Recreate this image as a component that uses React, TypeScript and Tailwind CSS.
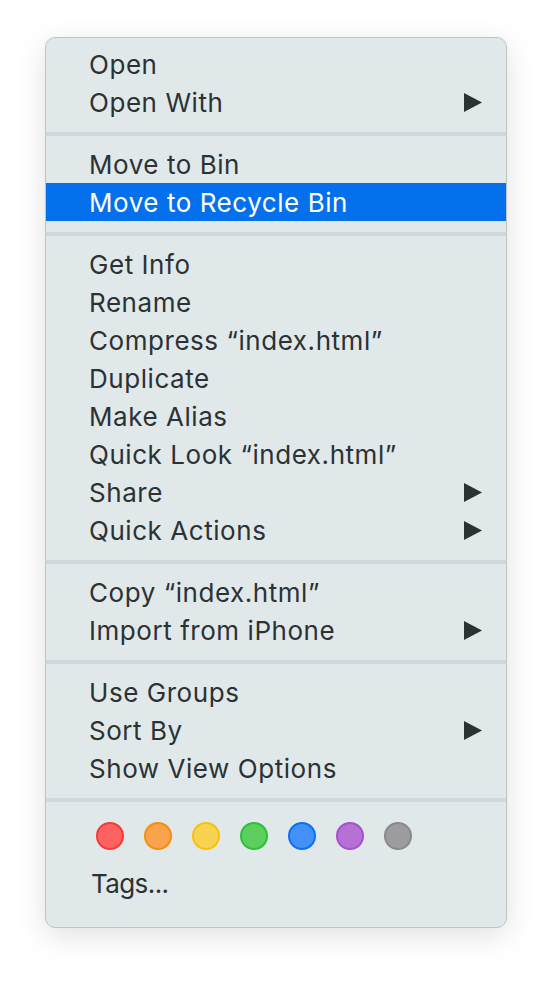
import React from "react";

type Item = { label: string; arrow?: boolean; active?: boolean };

const groups: Item[][] = [
  [{ label: "Open" }, { label: "Open With", arrow: true }],
  [{ label: "Move to Bin" }, { label: "Move to Recycle Bin", active: true }],
  [
    { label: "Get Info" },
    { label: "Rename" },
    { label: "Compress \u201cindex.html\u201d" },
    { label: "Duplicate" },
    { label: "Make Alias" },
    { label: "Quick Look \u201cindex.html\u201d" },
    { label: "Share", arrow: true },
    { label: "Quick Actions", arrow: true },
  ],
  [{ label: "Copy \u201cindex.html\u201d" }, { label: "Import from iPhone", arrow: true }],
  [{ label: "Use Groups" }, { label: "Sort By", arrow: true }, { label: "Show View Options" }],
];

const dots = [
  "bg-[#ff6160] border-[#f53b34]",
  "bg-[#f9a34c] border-[#f58f0b]",
  "bg-[#f8d251] border-[#f7c20c]",
  "bg-[#5ccf5f] border-[#29c23a]",
  "bg-[#4390fa] border-[#0a72f0]",
  "bg-[#b771d5] border-[#a650cc]",
  "bg-[#9c9b9f] border-[#8a898d]",
];

function Arrow({ active }: { active?: boolean }) {
  return (
    <svg width="18" height="19" viewBox="0 0 18 19" className="mr-[24px]">
      <polygon points="0,0 18,9.5 0,19" fill={active ? "#ffffff" : "#2b3234"} />
    </svg>
  );
}

function Row({ item }: { item: Item }) {
  return (
    <div
      className={`flex h-[38px] items-center justify-between pl-[43px] ${
        item.active ? "bg-[#0470ec] text-white" : "text-[#2b3234]"
      }`}
    >
      <span className="pt-[1px]">{item.label}</span>
      {item.arrow && <Arrow active={item.active} />}
    </div>
  );
}

function Sep() {
  return (
    <div className="flex h-[24px] flex-col pt-[11px]">
      <div className="h-[4px] bg-[#cdd9da]" />
    </div>
  );
}

export default function App() {
  return (
    <div className="min-h-[988px] w-[552px] bg-white pt-[37px] pl-[45px]">
      <div
        className="flex w-[462px] flex-col overflow-hidden rounded-[10px] border border-[#bfc3c4] bg-[#e1e8ea] pt-[7px] pb-0 text-[26px] leading-none tracking-[0.55px] shadow-[0_8px_30px_rgba(0,0,0,0.12)]"
        style={{ fontFamily: "Inter, 'Helvetica Neue', Arial, sans-serif" }}
      >
        {groups.map((g, gi) => (
          <React.Fragment key={gi}>
            {gi > 0 && <Sep />}
            {g.map((it) => (
              <Row key={it.label} item={it} />
            ))}
          </React.Fragment>
        ))}
        <Sep />
        <div className="flex h-[50px] items-center gap-[20px] pl-[50px]">
          {dots.map((d, i) => (
            <div key={i} className={`h-[28px] w-[28px] rounded-full border-2 ${d}`} />
          ))}
        </div>
        <div className="flex h-[44px] items-center pl-[45px] pt-[1px] tracking-[-0.6px] text-[#2b3234]">Tags...</div>
        <div className="h-[22px]" />
      </div>
    </div>
  );
}
